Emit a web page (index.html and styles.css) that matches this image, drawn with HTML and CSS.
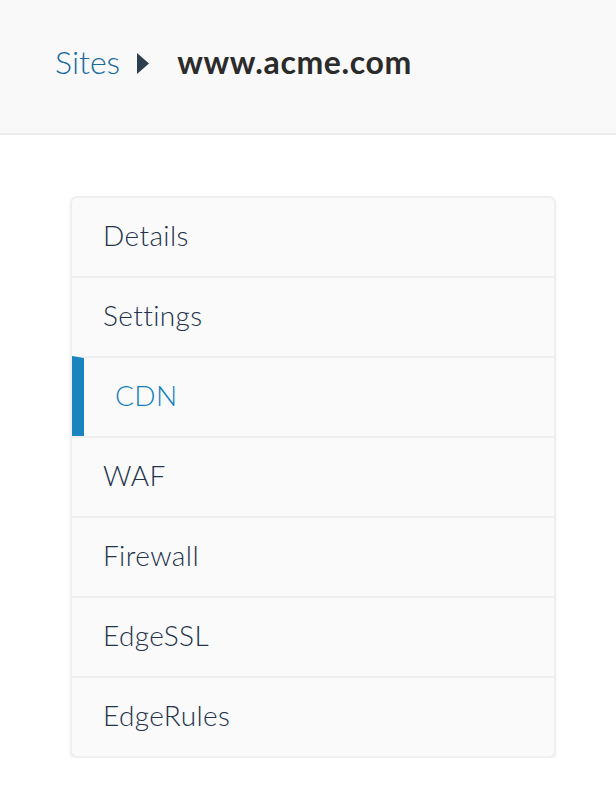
FILE: index.html
```html
<!DOCTYPE html>
<html>
<head>
<meta charset="utf-8">
<link rel="stylesheet" href="styles.css">
</head>
<body>
<header class="topbar">
  <nav class="crumbs">
    <a class="crumb-link" href="#">Sites</a>
    <svg class="crumb-sep" width="12" height="21" viewBox="0 0 12 21"><path d="M0 0 L12 10.5 L0 21 Z" fill="#2c3e50"/></svg>
    <span class="crumb-current">www.acme.com</span>
  </nav>
</header>
<main class="content">
  <ul class="menu">
    <li class="menu-item">Details</li>
    <li class="menu-item">Settings</li>
    <li class="menu-item active">CDN</li>
    <li class="menu-item">WAF</li>
    <li class="menu-item">Firewall</li>
    <li class="menu-item">EdgeSSL</li>
    <li class="menu-item">EdgeRules</li>
  </ul>
</main>
</body>
</html>
```
FILE: styles.css
```css
* { box-sizing: border-box; }
html, body { margin: 0; padding: 0; background: #ffffff; }
body { font-family: Lato, "Open Sans", sans-serif; }
.topbar {
  height: 135px;
  background: #f9f9f9;
  border-bottom: 2px solid #ececec;
  display: flex;
  align-items: center;
  padding: 0 0 11px 55px;
}
.crumbs { display: flex; align-items: center; }
.crumb-link {
  color: #1a6a9c;
  text-decoration: none;
  font-size: 32px;
  font-weight: 300;
}
.crumb-sep { margin: 4px 28px 0 17px; }
.crumb-current {
  color: #2b2b2b;
  font-size: 32px;
  font-weight: 700;
  letter-spacing: 0.6px;
}
.content { padding: 61px 0 0 70px; }
.menu {
  list-style: none;
  margin: 0;
  padding: 0;
  width: 486px;
  background: #fafafa;
  border: 2px solid #efefef;
  border-radius: 7px;
  box-shadow: 0 2px 4px rgba(0,0,0,0.06);
  overflow: hidden;
}
.menu-item {
  height: 80px;
  display: flex;
  align-items: center;
  padding: 0 0 5px 31px;
  font-size: 28px;
  font-weight: 300;
  letter-spacing: 0.4px;
  color: #22334a;
  border-top: 2px solid #efefef;
}
.menu-item:first-child { border-top: none; height: 78px; }
.menu-item.active {
  color: #167fb9;
  border-left: 12px solid #1a84be;
}
```
